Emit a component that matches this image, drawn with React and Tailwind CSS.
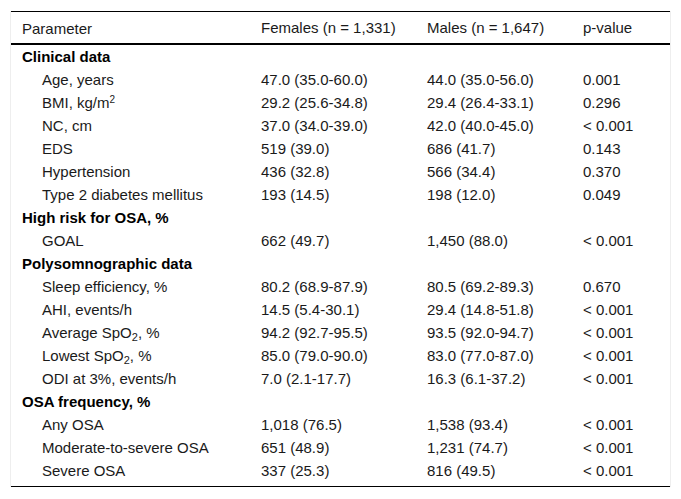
const sections = [
  {
    title: 'Clinical data',
    rows: [
      [<>Age, years</>, '47.0 (35.0-60.0)', '44.0 (35.0-56.0)', '0.001'],
      [<>BMI, kg/m<sup className="text-[10px] leading-none relative -top-[5px]">2</sup></>, '29.2 (25.6-34.8)', '29.4 (26.4-33.1)', '0.296'],
      [<>NC, cm</>, '37.0 (34.0-39.0)', '42.0 (40.0-45.0)', '< 0.001'],
      [<>EDS</>, '519 (39.0)', '686 (41.7)', '0.143'],
      [<>Hypertension</>, '436 (32.8)', '566 (34.4)', '0.370'],
      [<>Type 2 diabetes mellitus</>, '193 (14.5)', '198 (12.0)', '0.049'],
    ],
  },
  {
    title: 'High risk for OSA, %',
    rows: [[<>GOAL</>, '662 (49.7)', '1,450 (88.0)', '< 0.001']],
  },
  {
    title: 'Polysomnographic data',
    rows: [
      [<>Sleep efficiency, %</>, '80.2 (68.9-87.9)', '80.5 (69.2-89.3)', '0.670'],
      [<>AHI, events/h</>, '14.5 (5.4-30.1)', '29.4 (14.8-51.8)', '< 0.001'],
      [<>Average SpO<sub className="text-[11px] leading-none">2</sub>, %</>, '94.2 (92.7-95.5)', '93.5 (92.0-94.7)', '< 0.001'],
      [<>Lowest SpO<sub className="text-[11px] leading-none">2</sub>, %</>, '85.0 (79.0-90.0)', '83.0 (77.0-87.0)', '< 0.001'],
      [<>ODI at 3%, events/h</>, '7.0 (2.1-17.7)', '16.3 (6.1-37.2)', '< 0.001'],
    ],
  },
  {
    title: 'OSA frequency, %',
    rows: [
      [<>Any OSA</>, '1,018 (76.5)', '1,538 (93.4)', '< 0.001'],
      [<>Moderate-to-severe OSA</>, '651 (48.9)', '1,231 (74.7)', '< 0.001'],
      [<>Severe OSA</>, '337 (25.3)', '816 (49.5)', '< 0.001'],
    ],
  },
];

export default function App() {
  return (
    <div className="w-[681px] h-[499px] bg-white pt-[11px] px-[10px] font-['Liberation_Sans',Arial,sans-serif] text-[15px] text-[#1a1a1a]">
      <div className="border-x border-[#eeeeee]">
        <table className="w-full table-fixed border-collapse">
          <colgroup>
            <col className="w-[239px]" />
            <col className="w-[166px]" />
            <col className="w-[156px]" />
            <col />
          </colgroup>
          <thead>
            <tr className="border-t border-black border-b-2">
              <th className="text-left font-normal px-[11px] pt-[8px] pb-[6px] leading-[17px]">Parameter</th>
              <th className="text-left font-normal px-[11px] leading-[17px]">Females (n = 1,331)</th>
              <th className="text-left font-normal px-[11px] leading-[17px]">Males (n = 1,647)</th>
              <th className="text-left font-normal px-[11px] leading-[17px]">p-value</th>
            </tr>
          </thead>
          <tbody>
            {sections.map((sec) => [
              <tr key={sec.title}>
                <td colSpan={4} className="px-[11px] py-[3px] leading-[17px] h-[23px] font-bold text-black">{sec.title}</td>
              </tr>,
              ...sec.rows.map((r, i) => (
                <tr key={sec.title + i}>
                  <td className="pl-[31px] pr-[11px] py-[3px] leading-[17px] h-[23px] whitespace-nowrap">{r[0]}</td>
                  <td className="px-[11px] py-[3px] leading-[17px]">{r[1]}</td>
                  <td className="px-[11px] py-[3px] leading-[17px]">{r[2]}</td>
                  <td className="px-[11px] py-[3px] leading-[17px]">{r[3]}</td>
                </tr>
              )),
            ])}
            <tr className="border-b border-black">
              <td colSpan={4} className="h-[4px] p-0"></td>
            </tr>
          </tbody>
        </table>
      </div>
    </div>
  );
}
